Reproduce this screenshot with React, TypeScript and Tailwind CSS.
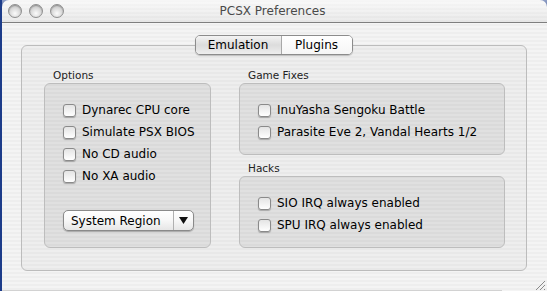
import React from "react"

const stripes = "bg-[repeating-linear-gradient(to_bottom,#eeeeee_0px,#eeeeee_2px,#f4f4f4_2px,#f4f4f4_4px)]"

const Checkbox = ({ label }: { label: string }) => (
  <div className="flex h-[22px] items-center">
    <div className="h-[13px] w-[13px] shrink-0 rounded-[3px] border border-[#8a8a8a] bg-gradient-to-b from-[#e4e4e4] to-white shadow-[0_1px_1px_rgba(0,0,0,0.25)]" />
    <span className="ml-[6px] text-[12px] leading-none text-black">{label}</span>
  </div>
)

const Group = ({ title, className, children }: { title: string; className: string; children: React.ReactNode }) => (
  <div className="flex flex-col">
    <div className="h-[14px] pl-[9px] text-[10.5px] leading-[14px] text-[#222]">{title}</div>
    <div className={`mt-[1px] box-border rounded-[6px] border border-[#bdbdbd] bg-[rgba(0,0,0,0.06)] pl-[18px] pt-[15px] ${className}`}>{children}</div>
  </div>
)

const Light = () => (
  <div className="h-[14px] w-[14px] rounded-full border border-[#8f8f8f] bg-[radial-gradient(circle_at_50%_70%,#fbfbfb_0%,#d6d6d6_55%,#b4b4b4_100%)] shadow-[inset_0_1px_1px_rgba(0,0,0,0.25)]" />
)

export default function App() {
  return (
    <div className="flex h-[291px] w-[547px] overflow-hidden bg-[#1d3c8a] font-['DejaVu_Sans',sans-serif]">
      <div className={`ml-[2px] flex flex-1 flex-col rounded-t-[7px] ${stripes}`}>
        {/* Title bar */}
        <div className="relative flex h-[23px] items-center border-b border-[#7e7e7e] bg-gradient-to-b from-[rgba(255,255,255,0.5)] to-[rgba(0,0,0,0.03)] pl-[6px]">
          <div className="flex gap-[7px]">
            <Light />
            <Light />
            <Light />
          </div>
          <div className="absolute inset-x-0 top-0 flex h-[22px] items-center justify-center pr-[4px] text-[12px] text-[#4a4a4a]">PCSX Preferences</div>
        </div>

        {/* Content */}
        <div className="flex flex-col pl-[19px] pt-[12px]">
          <div className="relative z-10 flex w-[505px] justify-center">
            <div className="flex h-[20px] overflow-hidden rounded-[5px] border border-[#8c8c8c] text-[12px] shadow-[0_1px_1px_rgba(0,0,0,0.2)]">
              <div className="flex w-[86px] items-center justify-center border-r border-[#a8a8a8] bg-gradient-to-b from-[#f4f4f4] via-[#dcdcdc] to-[#eeeeee] text-black">Emulation</div>
              <div className="flex w-[70px] items-center justify-center bg-gradient-to-b from-white to-[#f6f6f6] text-black">Plugins</div>
            </div>
          </div>
          <div className="-mt-[10px] box-border flex h-[226px] w-[506px] gap-[28px] rounded-[6px] border border-[#bcbcbc] bg-[rgba(0,0,0,0.025)] pl-[22px] pt-[22px]">
            <div className="w-[167px]">
              <Group title="Options" className="h-[165px]">
                <Checkbox label="Dynarec CPU core" />
                <Checkbox label="Simulate PSX BIOS" />
                <Checkbox label="No CD audio" />
                <Checkbox label="No XA audio" />
                <div className="mt-[23px] flex h-[21px] w-[131px] overflow-hidden rounded-[5px] border border-[#8a8a8a] bg-gradient-to-b from-white via-[#f7f7f7] to-[#e6e6e6] text-[12px] shadow-[0_1px_1px_rgba(0,0,0,0.25)]">
                  <div className="flex flex-1 items-center pl-[7px] text-black">System Region</div>
                  <div className="flex w-[20px] items-center justify-center border-l border-[#b0b0b0]">
                    <svg width="9" height="7" viewBox="0 0 9 7">
                      <path d="M0 0 H9 L4.5 7 Z" fill="#111" />
                    </svg>
                  </div>
                </div>
              </Group>
            </div>
            <div className="flex w-[266px] flex-col">
              <Group title="Game Fixes" className="h-[72px]">
                <Checkbox label="InuYasha Sengoku Battle" />
                <Checkbox label="Parasite Eve 2, Vandal Hearts 1/2" />
              </Group>
              <div className="mt-[6px]">
                <Group title="Hacks" className="h-[72px]">
                  <Checkbox label="SIO IRQ always enabled" />
                  <Checkbox label="SPU IRQ always enabled" />
                </Group>
              </div>
            </div>
          </div>
          <div className="flex items-end justify-between pt-[9px]">
            <div className="ml-[-19px] mt-[10px] h-px w-[500px] bg-[#d2d2d2]" />
            <svg width="11" height="11" viewBox="0 0 11 11" className="mr-[1px]">
              <path d="M10 1 L1 10 M10 5 L5 10 M10 9 L9 10" stroke="#8a8a8a" strokeWidth="1" />
            </svg>
          </div>
        </div>
      </div>
    </div>
  )
}
